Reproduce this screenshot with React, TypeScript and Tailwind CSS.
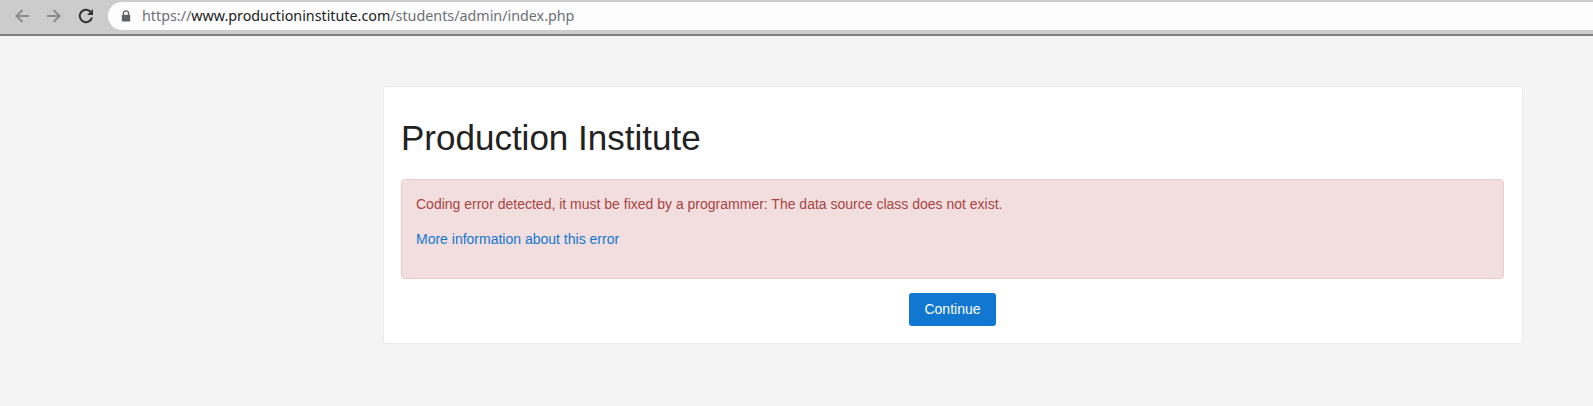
export default function App() {
  return (
    <div className="h-[406px] w-[1593px] overflow-hidden bg-[#f4f4f4] font-['Liberation_Sans',sans-serif]">
      {/* Browser toolbar */}
      <div className="flex h-[36px] items-start border-b-2 border-[#808080] bg-[#cccccc] pt-[2px]">
        <div className="flex h-[28px] w-[108px] items-center pl-[14px]">
          <svg width="16" height="16" viewBox="0 0 16 16" className="text-[#8c8c8c]">
            <path d="M15 8H2.5M8.5 2 2.5 8l6 6" fill="none" stroke="currentColor" strokeWidth="2" />
          </svg>
          <svg width="16" height="16" viewBox="0 0 16 16" className="ml-[16px] text-[#8c8c8c]">
            <path d="M1 8h12.5M7.5 2l6 6-6 6" fill="none" stroke="currentColor" strokeWidth="2" />
          </svg>
          <svg width="16" height="16" viewBox="0 0 16 16" className="ml-[16px] text-[#333333]">
            <path d="M13.2 4.6A6.2 6.2 0 1 0 14 9.5" fill="none" stroke="currentColor" strokeWidth="2" />
            <path d="M15 1v6H9z" fill="currentColor" />
          </svg>
        </div>
        <div className="flex h-[28px] flex-1 items-center rounded-l-[14px] bg-[#fdfdfd] pl-[13px] font-['Noto_Sans',sans-serif] text-[14.3px] text-[#6b7076]">
          <svg width="10" height="12" viewBox="0 0 10 12" className="text-[#5f6368]">
            <path d="M2.4 5V3.4a2.6 2.6 0 0 1 5.2 0V5" fill="none" stroke="currentColor" strokeWidth="1.3" />
            <rect x="0.8" y="4.8" width="8.4" height="6.6" rx="1" fill="currentColor" />
          </svg>
          <span className="ml-[11px]">
            https://<span className="text-[#202124]">www.productioninstitute.com</span>/students/admin/index.php
          </span>
        </div>
      </div>

      {/* Page */}
      <div className="ml-[383px] mt-[50px] h-[258px] w-[1140px] rounded-[3px] border border-[#ebebeb] bg-white pl-[17px] pr-[18px] pt-[30px]">
        <h1 className="text-[35px] leading-[42px] text-[#222222]">Production Institute</h1>
        <div className="mt-[20px] h-[100px] rounded-[4px] border border-[#ebcccc] bg-[#f2dede] px-[14px] pt-[14px] text-[14px] leading-[21px] text-[#a94442]">
          <p>Coding error detected, it must be fixed by a programmer: The data source class does not exist.</p>
          <p className="mt-[14px]">
            <a className="text-[#1177d1]">More information about this error</a>
          </p>
        </div>
        <div className="mt-[14px] flex justify-center">
          <button className="h-[33px] w-[87px] rounded-[3px] bg-[#1177d1] text-[14px] text-white">Continue</button>
        </div>
      </div>
    </div>
  );
}
